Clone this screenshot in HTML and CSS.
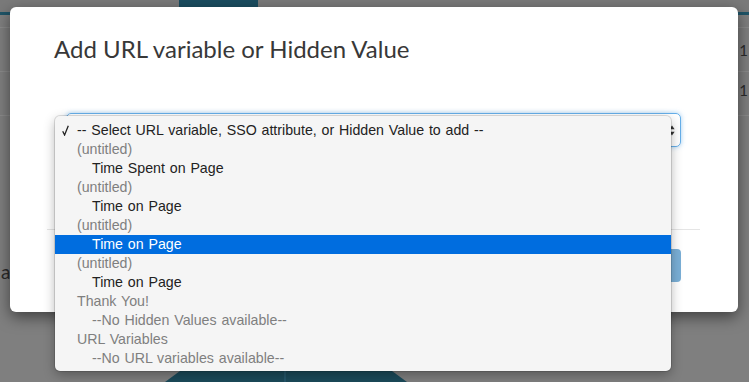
FILE: index.html
```html
<!DOCTYPE html>
<html lang="en">
<head>
    <meta charset="UTF-8">
    <title>Add URL variable or Hidden Value</title>
    <link rel="stylesheet" href="styles.css">
</head>
<body>
    <!-- page behind the dialog (already dimmed) -->
    <div class="page">
        <header class="topbar">
            <span class="tab"></span>
        </header>
        <div class="content">
            <div class="row row-first"></div>
            <div class="row"><span class="num">1</span></div>
            <div class="row row-low"><span class="num">1</span></div>
            <div class="side-text">a</div>
            <div class="hex"></div>
        </div>
    </div>

    <!-- dialog -->
    <div class="modal">
        <div class="modal-header">
            <h2>Add URL variable or Hidden Value</h2>
        </div>
        <div class="modal-body">
            <div class="select-box">
                <svg class="select-arrows" width="6" height="11" viewBox="0 0 6 11">
                    <path d="M3 0.5 L5.6 4.2 L0.4 4.2 Z" fill="#333"/>
                    <path d="M3 10.5 L5.6 6.8 L0.4 6.8 Z" fill="#333"/>
                </svg>
            </div>
        </div>
        <div class="modal-footer">
            <button class="btn-add">Add</button>
        </div>
    </div>

    <!-- open select popup -->
    <ul class="dropdown">
        <li class="opt">
            <svg class="check" width="7" height="11" viewBox="0 0 7 11">
                <path d="M0.7 6.2 L2.6 10 L6.3 0.8" fill="none" stroke="#222" stroke-width="1.3"/>
            </svg>-- Select URL variable, SSO attribute, or Hidden Value to add --
        </li>
        <li class="group">(untitled)</li>
        <li class="opt indent">Time Spent on Page</li>
        <li class="group">(untitled)</li>
        <li class="opt indent">Time on Page</li>
        <li class="group">(untitled)</li>
        <li class="opt indent selected">Time on Page</li>
        <li class="group">(untitled)</li>
        <li class="opt indent">Time on Page</li>
        <li class="group">Thank You!</li>
        <li class="opt indent disabled">--No Hidden Values available--</li>
        <li class="group">URL Variables</li>
        <li class="opt indent disabled">--No URL variables available--</li>
    </ul>
</body>
</html>
```

FILE: styles.css
```css
* {
    box-sizing: border-box;
    margin: 0;
    padding: 0;
}
body {
    width: 749px;
    height: 382px;
    overflow: hidden;
    position: relative;
    background: #7f7f7f;
    font-family: Lato, "Liberation Sans", sans-serif;
}

/* dimmed page */
.page {
    display: flex;
    flex-direction: column;
    height: 382px;
}
.topbar {
    height: 15px;
    background: #7a7a7a;
    border-bottom: 3px solid #1f5467;
    padding-left: 179px;
}
.tab {
    display: block;
    width: 79px;
    height: 12px;
    background: #1b4d60;
}
.content {
    flex: 1;
    display: flex;
    flex-direction: column;
}
.row {
    height: 44px;
    border-bottom: 1px solid #8b8b8b;
    display: flex;
    align-items: center;
    justify-content: flex-end;
    padding-right: 1px;
}
.row-first {
    height: 13px;
}
.row-low {
    align-items: flex-start;
    padding-top: 9px;
}
.num {
    font-size: 15px;
    color: #2a2a2a;
}
.side-text {
    margin-top: 146px;
    font-size: 19px;
    line-height: 20px;
    color: #2a2a2a;
    padding-left: 1px;
}
.hex {
    margin-top: auto;
    margin-left: 165px;
    width: 242px;
    height: 11px;
    background: linear-gradient(to right, #1b4a5a 119px, #24566a 119px, #24566a 121px, #1b4a5a 121px);
    clip-path: polygon(15px 0, 227px 0, 100% 100%, 0 100%);
}

/* dialog */
.modal {
    position: absolute;
    left: 10px;
    top: 7px;
    width: 728px;
    height: 305px;
    background: #fff;
    border-radius: 6px;
    box-shadow: 0 5px 15px rgba(0, 0, 0, 0.5);
}
.modal-header {
    padding: 27px 44px 0;
}
.modal-header h2 {
    font-family: Lato, sans-serif;
    font-weight: normal;
    font-size: 24px;
    line-height: 29px;
    color: #383838;
}
.modal-body {
    padding: 50px 57px 0 56px;
}
.select-box {
    height: 34px;
    border: 1px solid #66afe9;
    border-radius: 5px;
    box-shadow: 0 0 5px rgba(102, 175, 233, 0.6);
    display: flex;
    align-items: center;
    justify-content: flex-end;
    padding-right: 5px;
}
.modal-footer {
    margin: 82px 38px 0 37px;
    border-top: 1px solid #e5e5e5;
    padding: 19px 19px 0 0;
    display: flex;
    justify-content: flex-end;
}
.btn-add {
    width: 90px;
    height: 33px;
    border: none;
    border-radius: 4px;
    background: #7aafd6;
    color: #fff;
    font-family: Lato, sans-serif;
    font-size: 14px;
}

/* select popup */
.dropdown {
    position: absolute;
    left: 55px;
    top: 116px;
    width: 616px;
    height: 255px;
    list-style: none;
    padding: 5px 0 3px;
    background: #f5f5f5;
    border-radius: 5px;
    box-shadow: 0 0 0 1px rgba(0, 0, 0, 0.12), 0 4px 12px rgba(0, 0, 0, 0.3);
    font-family: "Liberation Sans", Arial, sans-serif;
    font-size: 14.2px;
    word-spacing: 0.9px;
    line-height: 19px;
}
.dropdown li {
    height: 19px;
    padding-left: 22px;
    white-space: nowrap;
}
.opt {
    color: #222;
}
.group {
    color: #7f7f7f;
}
.indent {
    padding-left: 37px !important;
}
.disabled {
    color: #7f7f7f;
}
.selected {
    background: #006ddf;
    color: #fff;
}
.check {
    display: inline-block;
    margin-left: -15px;
    margin-right: 8px;
    vertical-align: -1px;
}
```
